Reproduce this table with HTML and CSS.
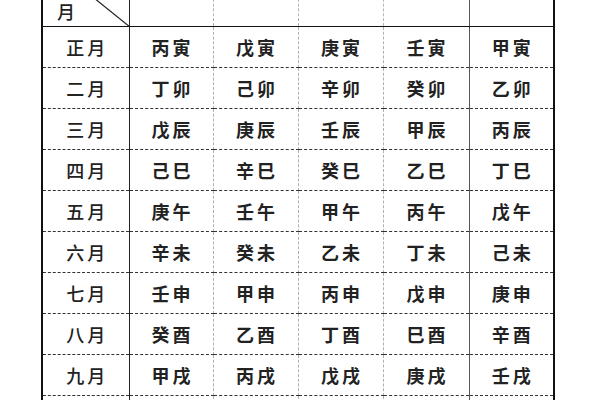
FILE: index.html
```html
<!DOCTYPE html>
<html lang="zh">
<head>
<meta charset="utf-8">
<link rel="stylesheet" href="styles.css">
</head>
<body>
<div class="page">
<table class="tbl">
  <colgroup>
    <col class="c0"><col class="c1"><col class="c2"><col class="c3"><col class="c4"><col class="c5">
  </colgroup>
  <thead>
    <tr class="head">
      <th class="corner">
        <svg class="diag" width="87" height="67" viewBox="0 0 87 67"><line x1="-6" y1="-8" x2="87" y2="67" stroke="#222" stroke-width="1.2"/></svg>
        <span class="yue">月</span>
      </th>
      <th class="g"><span class="gt">甲己</span></th>
      <th class="g"><span class="gt">乙庚</span></th>
      <th class="g"><span class="gt">丙辛</span></th>
      <th class="g"><span class="gt">丁壬</span></th>
      <th class="g last"><span class="gt">戊癸</span></th>
    </tr>
  </thead>
  <tbody>
    <tr><td class="m">正月</td><td>丙寅</td><td>戊寅</td><td>庚寅</td><td>壬寅</td><td class="last">甲寅</td></tr>
    <tr><td class="m">二月</td><td>丁卯</td><td>己卯</td><td>辛卯</td><td>癸卯</td><td class="last">乙卯</td></tr>
    <tr><td class="m">三月</td><td>戊辰</td><td>庚辰</td><td>壬辰</td><td>甲辰</td><td class="last">丙辰</td></tr>
    <tr><td class="m">四月</td><td>己巳</td><td>辛巳</td><td>癸巳</td><td>乙巳</td><td class="last">丁巳</td></tr>
    <tr><td class="m">五月</td><td>庚午</td><td>壬午</td><td>甲午</td><td>丙午</td><td class="last">戊午</td></tr>
    <tr><td class="m">六月</td><td>辛未</td><td>癸未</td><td>乙未</td><td>丁未</td><td class="last">己未</td></tr>
    <tr><td class="m">七月</td><td>壬申</td><td>甲申</td><td>丙申</td><td>戊申</td><td class="last">庚申</td></tr>
    <tr><td class="m">八月</td><td>癸酉</td><td>乙酉</td><td>丁酉</td><td>巳酉</td><td class="last">辛酉</td></tr>
    <tr><td class="m">九月</td><td>甲戌</td><td>丙戌</td><td>戊戌</td><td>庚戌</td><td class="last">壬戌</td></tr>
    <tr class="tail"><td class="m"></td><td></td><td></td><td></td><td></td><td class="last"></td></tr>
  </tbody>
</table>
</div>
</body>
</html>
```
FILE: styles.css
```css
html, body {
  margin: 0;
  padding: 0;
  background: #fff;
  overflow: hidden;
}
.page {
  width: 600px;
  height: 400px;
  overflow: hidden;
  padding-left: 41px;
  box-sizing: border-box;
}
.tbl {
  margin-top: -40px;
  border-collapse: collapse;
  table-layout: fixed;
  width: 512px;
  font-family: "Noto Sans CJK SC", "Noto Sans CJK JP", sans-serif;
  font-size: 18px;
  font-weight: 700;
  color: #222;
  border-left: 2px solid #111;
  border-right: 2px solid #111;
}
.c0 { width: 87px; }
.c1 { width: 84px; }
.c2 { width: 85px; }
.c3 { width: 85px; }
.c4 { width: 86px; }
.c5 { width: 85px; }
.head th {
  height: 66px;
  padding: 0;
  font-weight: 400;
  vertical-align: top;
  padding-top: 6px;
  box-sizing: border-box;
  border-bottom: 1.5px solid #111;
}
.gt {
  display: inline-block;
  font-size: 16px;
  line-height: 1;
  color: #ececec;
  letter-spacing: 2px;
}
.corner {
  position: relative;
  border-right: 1px solid #222;
  text-align: left;
}
.diag {
  position: absolute;
  left: 0;
  top: 0;
}
.yue {
  position: absolute;
  left: 14px;
  top: 42px;
  color: #222;
  font-size: 18px;
  line-height: 1;
  font-weight: 500;
}
.g {
  border-right: 1px dashed #b5b5b5;
}
td {
  height: 40px;
  padding: 0;
  text-align: center;
  vertical-align: middle;
  line-height: 1;
  letter-spacing: 3px;
  text-indent: 3px;
  border-bottom: 1px dashed #333;
  border-right: 1px dashed #b0b0b0;
}
td.m {
  border-right: 1px solid #222;
  font-weight: 500;
}
td:nth-child(5), th:nth-child(5) {
  border-right: 1px solid #555;
}
td.last, th.last {
  border-right: 2px solid #111;
}
.tail td {
  height: 20px;
}
```
